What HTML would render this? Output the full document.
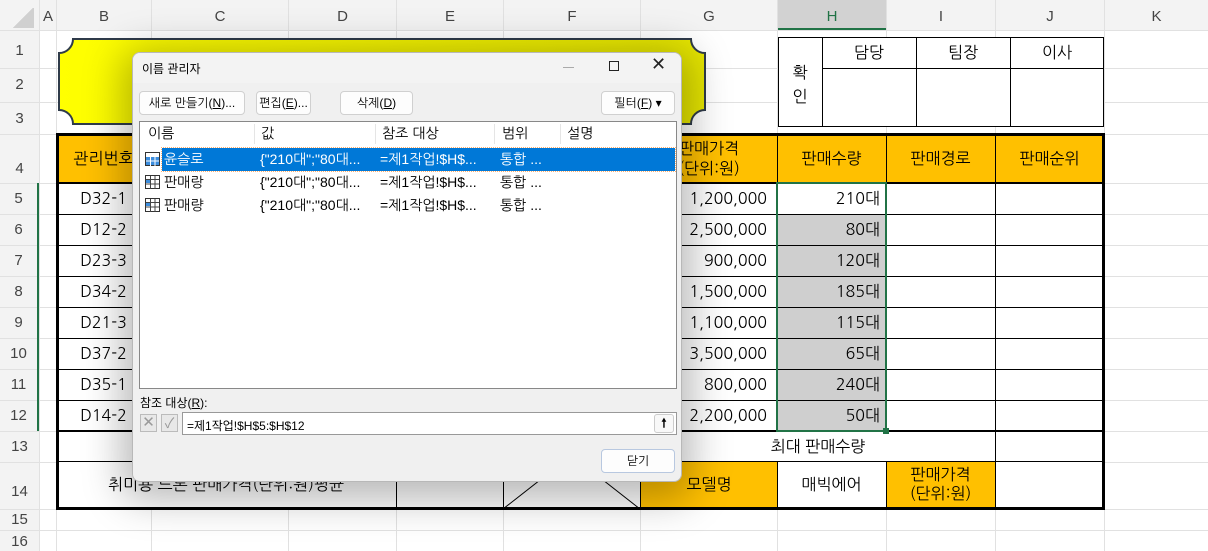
<!DOCTYPE html>
<html><head><meta charset="utf-8"><style>
*{margin:0;padding:0;box-sizing:border-box}
body{width:1208px;height:551px;overflow:hidden;background:#fff;position:relative;font-family:"Liberation Sans","NanumGothic","Noto Sans CJK KR",sans-serif;color:#000}
.a{position:absolute}
.vl{position:absolute;width:1px;background:#e1e1e1;top:0;height:551px}
.hl{position:absolute;height:1px;background:#e1e1e1;left:0;width:1208px}
.ch{position:absolute;top:0;height:30px;line-height:34px;text-align:center;font-size:15px;color:#444;background:#f3f3f3}
.rh{position:absolute;left:0;width:39px;text-align:center;font-size:15px;color:#444;background:#f3f3f3}
.c{position:absolute;display:flex;align-items:center;justify-content:center;font-size:16px;font-family:"NanumGothic","Noto Sans CJK KR",sans-serif}
.o{background:#ffc000}
.bk{position:absolute;background:#000}
.d{font-family:"Liberation Sans","Noto Sans CJK KR",sans-serif;font-size:12px}
.btn{position:absolute;height:24px;border:1px solid #d0d0d0;border-radius:4px;background:#fdfdfd;font-size:12px;display:flex;align-items:center;justify-content:center}
.row{position:absolute;left:0;width:535px;height:23px;font-size:14px;line-height:23px}
.row span{position:absolute;white-space:nowrap}
</style></head><body>
<div class="a" style="left:0;top:0;width:1208px;height:30px;background:#f3f3f3"></div>
<div class="a" style="left:0;top:0;width:39px;height:551px;background:#f3f3f3"></div>
<div class="vl" style="left:39px"></div><div class="vl" style="left:56px"></div><div class="vl" style="left:151px"></div><div class="vl" style="left:288px"></div><div class="vl" style="left:396px"></div><div class="vl" style="left:503px"></div><div class="vl" style="left:640px"></div><div class="vl" style="left:777px"></div><div class="vl" style="left:886px"></div><div class="vl" style="left:995px"></div><div class="vl" style="left:1104px"></div>
<div class="hl" style="top:30px"></div><div class="hl" style="top:68px"></div><div class="hl" style="top:102px"></div><div class="hl" style="top:134px"></div><div class="hl" style="top:183px"></div><div class="hl" style="top:214px"></div><div class="hl" style="top:245px"></div><div class="hl" style="top:276px"></div><div class="hl" style="top:307px"></div><div class="hl" style="top:338px"></div><div class="hl" style="top:369px"></div><div class="hl" style="top:400px"></div><div class="hl" style="top:431px"></div><div class="hl" style="top:462px"></div><div class="hl" style="top:509px"></div><div class="hl" style="top:530px"></div>
<div class="ch" style="left:40px;width:16px">A</div><div class="ch" style="left:57px;width:94px">B</div><div class="ch" style="left:152px;width:136px">C</div><div class="ch" style="left:289px;width:107px">D</div><div class="ch" style="left:397px;width:106px">E</div><div class="ch" style="left:504px;width:136px">F</div><div class="ch" style="left:641px;width:136px">G</div><div class="ch" style="left:778px;width:108px;background:#d2d2d2;border-bottom:2px solid #217346;color:#217346">H</div><div class="ch" style="left:887px;width:108px">I</div><div class="ch" style="left:996px;width:108px">J</div><div class="ch" style="left:1105px;width:103px">K</div>
<div class="a" style="left:12px;top:8px;width:22px;height:20px;background:linear-gradient(135deg,transparent 50%,#d0d0d0 50%)"></div>
<div class="rh" style="top:42px">1</div><div class="rh" style="top:76px">2</div><div class="rh" style="top:110px">3</div><div class="rh" style="top:160px">4</div>
<div class="a" style="left:37px;top:183px;width:2px;height:248px;background:#217346"></div>
<div class="rh" style="top:190px;width:37px">5</div><div class="rh" style="top:221px;width:37px">6</div><div class="rh" style="top:252px;width:37px">7</div><div class="rh" style="top:283px;width:37px">8</div><div class="rh" style="top:314px;width:37px">9</div><div class="rh" style="top:345px;width:37px">10</div><div class="rh" style="top:376px;width:37px">11</div><div class="rh" style="top:407px;width:37px">12</div>
<div class="rh" style="top:438px">13</div><div class="rh" style="top:483px">14</div><div class="rh" style="top:511px">15</div><div class="rh" style="top:533px">16</div>

<svg class="a" style="left:57px;top:37px" width="652" height="91"><defs><linearGradient id="g" x1="0" x2="1"><stop offset="0" stop-color="#ffff00"/><stop offset="1" stop-color="#e6e600"/></linearGradient></defs><path d="M16 2H634A14 14 0 0 0 648 16V73A14 14 0 0 0 634 87H16A14 14 0 0 0 2 73V16A14 14 0 0 0 16 2Z" fill="url(#g)" stroke="#2f3b4a" stroke-width="2"/></svg>

<div class="a" style="left:778px;top:37px;width:326px;height:90px;border:1.5px solid #000;background:#fff"></div>
<div class="bk" style="left:822px;top:37px;width:1px;height:90px"></div><div class="bk" style="left:916px;top:37px;width:1px;height:90px"></div><div class="bk" style="left:1010px;top:37px;width:1px;height:90px"></div><div class="bk" style="left:822px;top:68px;width:282px;height:1px"></div>
<div class="c" style="left:778px;top:55px;width:44px;height:60px;flex-direction:column;line-height:24px">확<br>인</div>
<div class="c" style="left:822px;top:38px;width:94px;height:30px">담당</div><div class="c" style="left:916px;top:38px;width:94px;height:30px">팀장</div><div class="c" style="left:1010px;top:38px;width:94px;height:30px">이사</div>

<div class="a" style="left:56px;top:134px;width:1048px;height:375px;background:#fff"></div>
<div class="a o" style="left:56px;top:134px;width:1048px;height:49px"></div>
<div class="c" style="left:56px;top:134px;width:95px;height:49px">관리번호</div>
<div class="c" style="left:641px;top:134px;width:136px;height:49px;line-height:20px;text-align:center">판매가격<br>(단위:원)</div>
<div class="c" style="left:777px;top:134px;width:109px;height:49px">판매수량</div><div class="c" style="left:886px;top:134px;width:109px;height:49px">판매경로</div><div class="c" style="left:995px;top:134px;width:109px;height:49px">판매순위</div>
<div class="a" style="left:778px;top:214px;width:108px;height:217px;background:#cfcfcf"></div>
<div class="c" style="left:56px;top:183px;width:95px;height:31px">D32-1</div><div class="c" style="left:56px;top:214px;width:95px;height:31px">D12-2</div><div class="c" style="left:56px;top:245px;width:95px;height:31px">D23-3</div><div class="c" style="left:56px;top:276px;width:95px;height:31px">D34-2</div><div class="c" style="left:56px;top:307px;width:95px;height:31px">D21-3</div><div class="c" style="left:56px;top:338px;width:95px;height:31px">D37-2</div><div class="c" style="left:56px;top:369px;width:95px;height:31px">D35-1</div><div class="c" style="left:56px;top:400px;width:95px;height:31px">D14-2</div>
<div class="c" style="left:641px;top:183px;width:126px;height:31px;justify-content:flex-end">1,200,000</div><div class="c" style="left:641px;top:214px;width:126px;height:31px;justify-content:flex-end">2,500,000</div><div class="c" style="left:641px;top:245px;width:126px;height:31px;justify-content:flex-end">900,000</div><div class="c" style="left:641px;top:276px;width:126px;height:31px;justify-content:flex-end">1,500,000</div><div class="c" style="left:641px;top:307px;width:126px;height:31px;justify-content:flex-end">1,100,000</div><div class="c" style="left:641px;top:338px;width:126px;height:31px;justify-content:flex-end">3,500,000</div><div class="c" style="left:641px;top:369px;width:126px;height:31px;justify-content:flex-end">800,000</div><div class="c" style="left:641px;top:400px;width:126px;height:31px;justify-content:flex-end">2,200,000</div>
<div class="c" style="left:778px;top:183px;width:102px;height:31px;justify-content:flex-end">210대</div><div class="c" style="left:778px;top:214px;width:102px;height:31px;justify-content:flex-end">80대</div><div class="c" style="left:778px;top:245px;width:102px;height:31px;justify-content:flex-end">120대</div><div class="c" style="left:778px;top:276px;width:102px;height:31px;justify-content:flex-end">185대</div><div class="c" style="left:778px;top:307px;width:102px;height:31px;justify-content:flex-end">115대</div><div class="c" style="left:778px;top:338px;width:102px;height:31px;justify-content:flex-end">65대</div><div class="c" style="left:778px;top:369px;width:102px;height:31px;justify-content:flex-end">240대</div><div class="c" style="left:778px;top:400px;width:102px;height:31px;justify-content:flex-end">50대</div>
<div class="bk" style="left:56px;top:214px;width:1048px;height:1px"></div><div class="bk" style="left:56px;top:245px;width:1048px;height:1px"></div><div class="bk" style="left:56px;top:276px;width:1048px;height:1px"></div><div class="bk" style="left:56px;top:307px;width:1048px;height:1px"></div><div class="bk" style="left:56px;top:338px;width:1048px;height:1px"></div><div class="bk" style="left:56px;top:369px;width:1048px;height:1px"></div><div class="bk" style="left:56px;top:400px;width:1048px;height:1px"></div>
<div class="bk" style="left:56px;top:182px;width:1048px;height:2px"></div><div class="bk" style="left:56px;top:430px;width:1048px;height:2px"></div><div class="bk" style="left:56px;top:461px;width:1048px;height:1px"></div>
<div class="bk" style="left:777px;top:134px;width:1px;height:297px"></div><div class="bk" style="left:886px;top:134px;width:1px;height:297px"></div><div class="bk" style="left:995px;top:134px;width:1px;height:375px"></div><div class="bk" style="left:640px;top:134px;width:1px;height:50px"></div>
<div class="bk" style="left:396px;top:462px;width:1px;height:47px"></div><div class="bk" style="left:503px;top:462px;width:1px;height:47px"></div><div class="bk" style="left:640px;top:462px;width:1px;height:47px"></div><div class="bk" style="left:777px;top:462px;width:1px;height:47px"></div><div class="bk" style="left:886px;top:462px;width:1px;height:47px"></div>
<div class="a o" style="left:641px;top:462px;width:136px;height:46px"></div><div class="a o" style="left:887px;top:462px;width:108px;height:46px"></div>
<div class="c" style="left:641px;top:462px;width:136px;height:46px">모델명</div><div class="c" style="left:777px;top:462px;width:109px;height:46px">매빅에어</div>
<div class="c" style="left:886px;top:462px;width:109px;height:46px;line-height:19px;text-align:center">판매가격<br>(단위:원)</div>
<div class="c" style="left:641px;top:431px;width:354px;height:31px">최대 판매수량</div>
<div class="c" style="left:56px;top:462px;width:340px;height:46px">취미용 드론 판매가격(단위:원)평균</div>
<svg class="a" style="left:503px;top:462px" width="137" height="47"><line x1="0" y1="47" x2="60" y2="0" stroke="#000"/><line x1="77" y1="0" x2="137" y2="47" stroke="#000"/></svg>
<div class="a" style="left:56px;top:133px;width:1049px;height:377px;border:3px solid #000"></div>
<div class="a" style="left:776px;top:182px;width:111px;height:250px;border:2px solid #217346"></div>
<div class="a" style="left:883px;top:428px;width:6px;height:6px;background:#217346"></div>

<div class="a" style="left:132px;top:52px;width:550px;height:430px;border-radius:8px;box-shadow:0 8px 40px 10px rgba(0,0,0,0.28)"></div>
<div class="a" style="left:132px;top:52px;width:550px;height:430px;background:#f0f0f0;border:1px solid #b8b8b8;border-radius:8px;overflow:hidden">
 <div class="a" style="left:0;top:0;width:550px;height:30px;background:#f3f3f3"></div>
 <div class="a d" style="left:9px;top:7px">이름 관리자</div>
 <div class="a" style="left:430px;top:14px;width:11px;height:1px;background:#aaa"></div>
 <div class="a" style="left:476px;top:8px;width:10px;height:10px;border:1px solid #222"></div>
 <div class="a" style="left:518px;top:1px;font-size:18px;color:#222;font-family:'DejaVu Sans'">✕</div>
 <div class="btn" style="left:6px;top:38px;width:106px">새로 만들기(<u>N</u>)...</div>
 <div class="btn" style="left:123px;top:38px;width:55px">편집(<u>E</u>)...</div>
 <div class="btn" style="left:207px;top:38px;width:73px">삭제(<u>D</u>)</div>
 <div class="btn" style="left:468px;top:38px;width:74px">필터(<u>F</u>) ▾</div>
 <div class="a" style="left:6px;top:68px;width:538px;height:268px;background:#fff;border:1px solid #888">
  <div class="row" style="top:0;height:24px"><span style="left:8px">이름</span><span style="left:121px">값</span><span style="left:242px">참조 대상</span><span style="left:362px">범위</span><span style="left:427px">설명</span></div>
  <div class="a" style="left:114px;top:2px;width:1px;height:20px;background:#e5e5e5"></div><div class="a" style="left:235px;top:2px;width:1px;height:20px;background:#e5e5e5"></div><div class="a" style="left:354px;top:2px;width:1px;height:20px;background:#e5e5e5"></div><div class="a" style="left:420px;top:2px;width:1px;height:20px;background:#e5e5e5"></div>
  <div class="a" style="left:22px;top:26px;width:513px;height:23px;background:#0078d7;outline:1px dotted #ffb070"></div>
  <div class="row" style="top:26px;color:#fff"><span style="left:24px">윤슬로</span><span style="left:120px">{"210대";"80대...</span><span style="left:240px">=제1작업!$H$...</span><span style="left:360px">통합 ...</span></div>
  <div class="row" style="top:49px"><span style="left:24px">판매랑</span><span style="left:120px">{"210대";"80대...</span><span style="left:240px">=제1작업!$H$...</span><span style="left:360px">통합 ...</span></div>
  <div class="row" style="top:72px"><span style="left:24px">판매량</span><span style="left:120px">{"210대";"80대...</span><span style="left:240px">=제1작업!$H$...</span><span style="left:360px">통합 ...</span></div>
  <svg class="a" style="left:5px;top:30px" width="16" height="70"><g fill="#fff" stroke="#333" stroke-width="1"><rect x="0.5" y="0.5" width="14" height="13"/><rect x="0.5" y="23.5" width="14" height="13"/><rect x="0.5" y="46.5" width="14" height="13"/></g><g fill="#3c8ddd"><rect x="1" y="4" width="13" height="9"/><rect x="1" y="27" width="4" height="4"/><rect x="1" y="50" width="4" height="4"/></g><g stroke="#fff" stroke-width="1"><path d="M5.5 1V14M10 1V14M1 4.5H14M1 9H14"/></g><g stroke="#444" stroke-width="1"><path d="M5.5 24V37M10 24V37M1 27.5H14M1 32H14M5.5 47V60M10 47V60M1 50.5H14M1 55H14"/></g></svg>
 </div>
 <div class="a d" style="left:7px;top:341px">참조 대상(<u>R</u>):</div>
 <div class="a" style="left:7px;top:361px;width:17px;height:18px;border:1px solid #bbb;background:#e8e8e8;color:#999;font-size:15px;line-height:16px;text-align:center">✕</div>
 <div class="a" style="left:28px;top:361px;width:17px;height:18px;border:1px solid #bbb;background:#e8e8e8;color:#999;font-size:14px;line-height:16px;text-align:center">✓</div>
 <div class="a d" style="left:49px;top:359px;width:495px;height:23px;background:#fff;border:1px solid #999;padding:4px 4px">=제1작업!$H$5:$H$12</div>
 <div class="a" style="left:521px;top:361px;width:20px;height:19px;border:1px solid #ccc;border-radius:3px;background:#f8f8f8;font-size:12px;text-align:center;font-weight:bold;line-height:17px">🠕</div>
 <div class="btn" style="left:468px;top:396px;width:74px;border-color:#b8c8e0">닫기</div>
</div>
</body></html>
